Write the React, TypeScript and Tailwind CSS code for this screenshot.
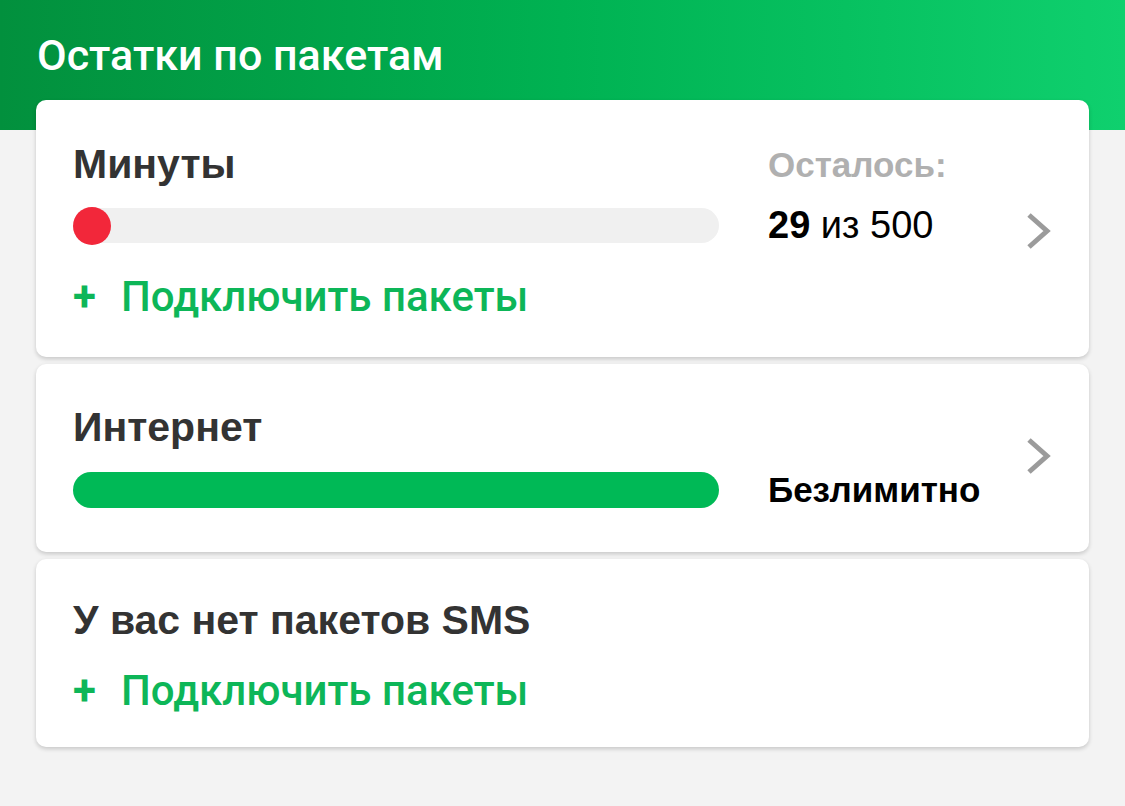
import React from "react";

const Chevron: React.FC = () => (
  <svg width="28" height="38" viewBox="0 0 28 38" fill="none">
    <path d="M4 3 L22 19 L4 35" stroke="#9b9b9b" strokeWidth="5" />
  </svg>
);

const AddLink: React.FC<{ className?: string }> = ({ className }) => (
  <div
    className={`flex items-center h-[50px] text-[#0db658] text-[42px] font-medium ${className ?? ""}`}
    style={{ fontFamily: "Roboto, sans-serif" }}
  >
    <span className="w-[48px] font-bold">+</span>
    <span>Подключить пакеты</span>
  </div>
);

const App: React.FC = () => {
  return (
    <div
      className="min-h-[806px] w-[1125px] bg-[#f3f3f3] overflow-hidden"
      style={{ fontFamily: '"Liberation Sans", Arial, sans-serif' }}
    >
      <div className="h-[130px] bg-gradient-to-r from-[#02903d] via-[#00b252] to-[#0fd06e] px-[37px] pt-[30px]">
        <h1
          className="text-white text-[43px] font-medium leading-[50px]"
          style={{ fontFamily: "Roboto, sans-serif" }}
        >
          Остатки по пакетам
        </h1>
      </div>

      <div className="-mt-[30px] px-[36px] flex flex-col gap-[7px]">
        {/* minutes */}
        <div className="bg-white rounded-[10px] shadow-[0_2px_4px_rgba(0,0,0,0.18)] pl-[37px] pr-[36px] pt-[40px] pb-[36px] flex items-center">
          <div className="w-[646px]">
            <div className="h-[50px] flex items-center text-[#333] text-[41px] font-bold">Минуты</div>
            <div className="mt-[18px] h-[35px] rounded-full bg-[#f0f0f0] flex items-center">
              <div className="w-[38px] h-[38px] rounded-full bg-[#f2273a]" />
            </div>
            <AddLink className="mt-[28px]" />
          </div>
          <div className="ml-[49px] flex-1 self-start">
            <div className="h-[50px] flex items-center text-[#b0b0b0] text-[35px] font-bold">Осталось:</div>
            <div className="mt-[18px] h-[35px] flex items-center text-black text-[38px]">
              <span className="font-bold">29</span>&nbsp;из 500
            </div>
          </div>
          <Chevron />
        </div>

        {/* internet */}
        <div className="bg-white rounded-[10px] shadow-[0_2px_4px_rgba(0,0,0,0.18)] pl-[37px] pr-[36px] pt-[39px] pb-[44px] flex items-center">
          <div className="w-[646px]">
            <div className="h-[50px] flex items-center text-[#333] text-[41px] font-bold">Интернет</div>
            <div className="mt-[19px] h-[36px] rounded-full bg-[#00b956]" />
          </div>
          <div className="ml-[49px] flex-1 self-end h-[36px] flex items-center text-black text-[35px] font-bold">
            Безлимитно
          </div>
          <Chevron />
        </div>

        {/* sms */}
        <div className="bg-white rounded-[10px] shadow-[0_2px_4px_rgba(0,0,0,0.18)] pl-[37px] pr-[36px] pt-[37px] pb-[32px]">
          <div className="h-[50px] flex items-center text-[#333] text-[41px] font-bold">У вас нет пакетов SMS</div>
          <AddLink className="mt-[19px]" />
        </div>
      </div>
    </div>
  );
};

export default App;
